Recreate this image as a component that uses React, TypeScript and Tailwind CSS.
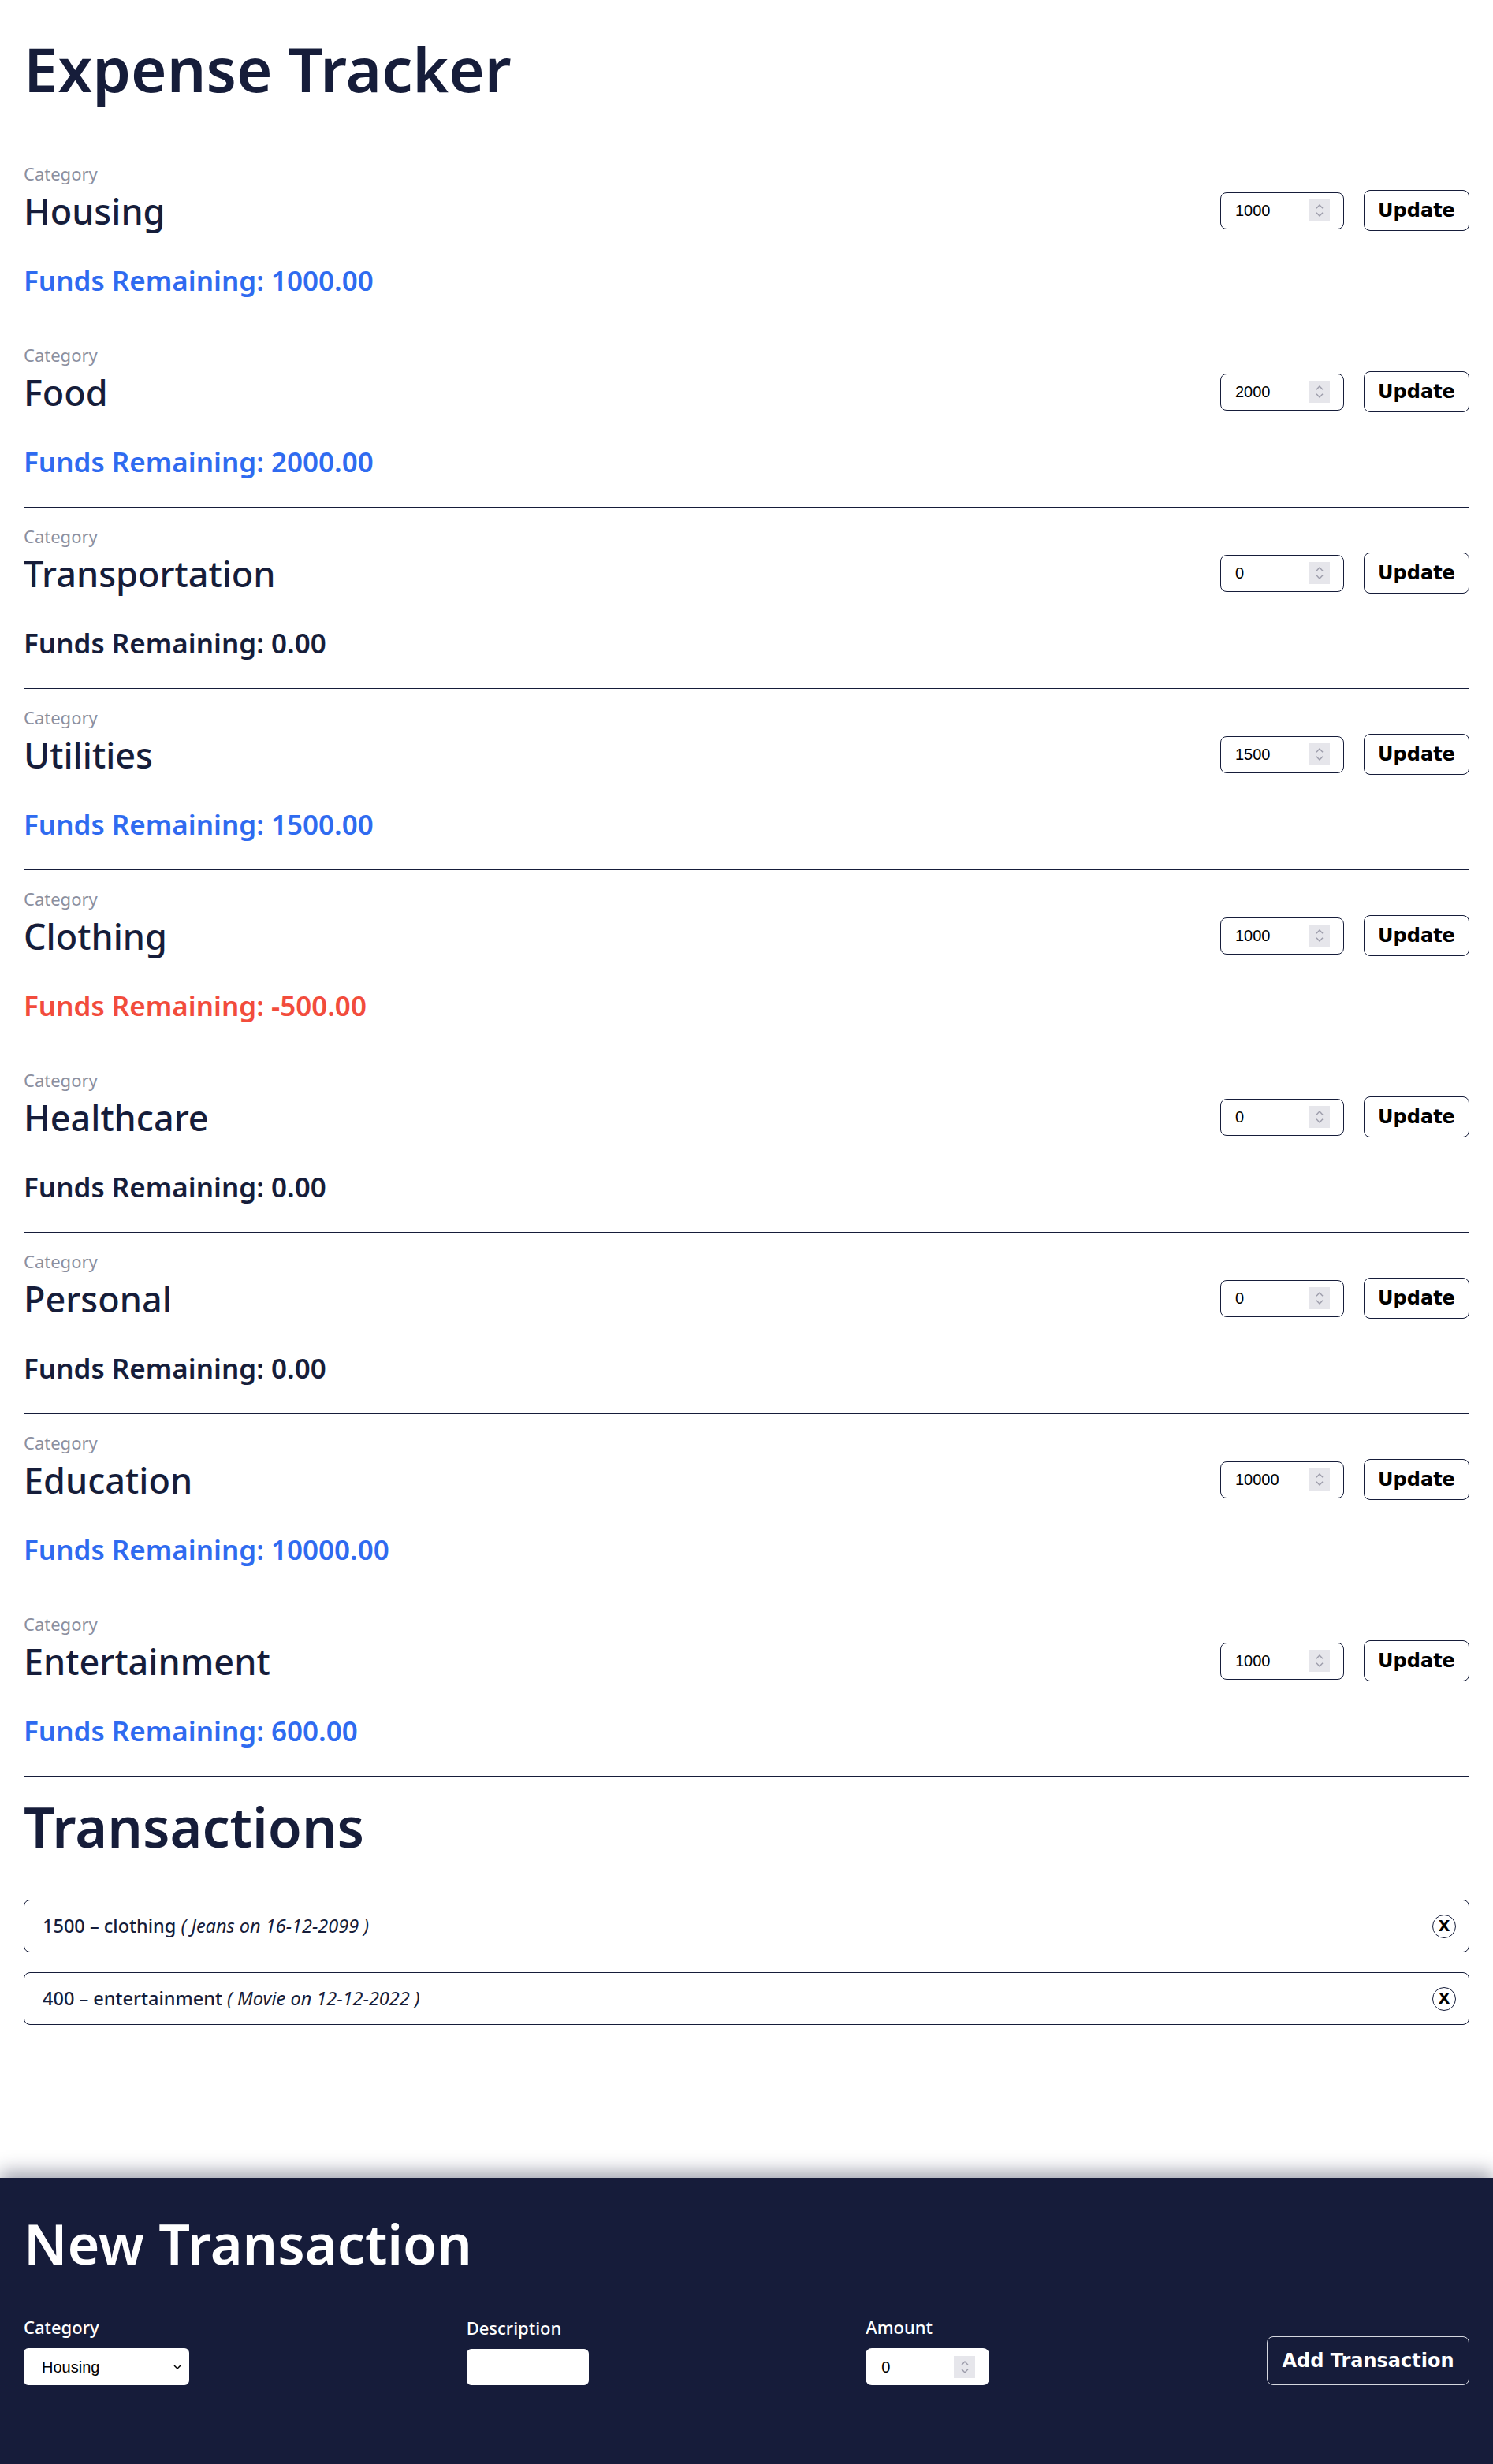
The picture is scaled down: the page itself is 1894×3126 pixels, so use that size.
import { useState } from "react";

type Category = {
    name: string;
    budget: number;
};

type Transaction = {
    id: number;
    amount: number;
    category: string;
    description: string;
    date: string;
};

const initialCategories: Category[] = [
    { name: "Housing", budget: 1000 },
    { name: "Food", budget: 2000 },
    { name: "Transportation", budget: 0 },
    { name: "Utilities", budget: 1500 },
    { name: "Clothing", budget: 1000 },
    { name: "Healthcare", budget: 0 },
    { name: "Personal", budget: 0 },
    { name: "Education", budget: 10000 },
    { name: "Entertainment", budget: 1000 },
];

const initialTransactions: Transaction[] = [
    { id: 1, amount: 1500, category: "clothing", description: "Jeans", date: "16-12-2099" },
    { id: 2, amount: 400, category: "entertainment", description: "Movie", date: "12-12-2022" },
];

function Spinner() {
    return (
        <div className="flex h-[28px] w-[27px] shrink-0 flex-col items-center justify-center gap-[4px] bg-[#e6e6eb]">
            <svg width="10" height="6" viewBox="0 0 10 6">
                <path d="M1 5.2 L5 1 L9 5.2" fill="none" stroke="#9d9dab" strokeWidth="1.4" />
            </svg>
            <svg width="10" height="6" viewBox="0 0 10 6">
                <path d="M1 0.8 L5 5 L9 0.8" fill="none" stroke="#9d9dab" strokeWidth="1.4" />
            </svg>
        </div>
    );
}

function CategoryRow({
    category,
    spent,
    onUpdate,
}: {
    category: Category;
    spent: number;
    onUpdate: (value: number) => void;
}) {
    const [draft, setDraft] = useState(String(category.budget));
    const remaining = category.budget - spent;

    // blue when there's money left, red when overspent, plain when nothing set
    let fundsColor = "text-[#161d3a]";
    if (remaining > 0) fundsColor = "text-[#2f6bf0]";
    if (remaining < 0) fundsColor = "text-[#f24c3c]";

    return (
        <section className="border-b border-[#161d3a] pt-[25px] pb-[40px]">
            <p className="h-[22px] text-[22px] leading-none text-[#8b8fa0]">Category</p>
            <div className="mt-[13px] flex h-[46px] items-center justify-between">
                <h2 className="text-[45px] leading-none font-medium">{category.name}</h2>
                <div className="flex items-center gap-[25px]">
                    <div className="flex h-[47px] w-[157px] items-center rounded-[8px] border border-[#161d3a] pl-[18px] pr-[17px]">
                        <input
                            type="text"
                            inputMode="numeric"
                            value={draft}
                            onChange={(e) => setDraft(e.target.value)}
                            className="w-full min-w-0 bg-transparent font-['Liberation_Sans',Arial,sans-serif] text-[20px] text-black outline-none"
                        />
                        <Spinner />
                    </div>
                    <button
                        type="button"
                        onClick={() => onUpdate(Number(draft) || 0)}
                        className="h-[52px] w-[134px] rounded-[8px] border border-[#161d3a] font-['DejaVu_Sans',Verdana,sans-serif] text-[24px] font-bold text-black"
                    >
                        Update
                    </button>
                </div>
            </div>
            <p className={`mt-[48px] h-[35px] text-[35px] leading-none font-semibold ${fundsColor}`}>
                Funds Remaining: {remaining.toFixed(2)}
            </p>
        </section>
    );
}

export default function App() {
    const [categories, setCategories] = useState<Category[]>(initialCategories);
    const [transactions, setTransactions] = useState<Transaction[]>(initialTransactions);
    const [newCategory, setNewCategory] = useState("Housing");
    const [newDescription, setNewDescription] = useState("");
    const [newAmount, setNewAmount] = useState("0");

    const spentFor = (name: string) =>
        transactions
            .filter((t) => t.category === name.toLowerCase())
            .reduce((sum, t) => sum + t.amount, 0);

    const updateBudget = (name: string, value: number) => {
        setCategories((prev) => prev.map((c) => (c.name === name ? { ...c, budget: value } : c)));
    };

    const addTransaction = () => {
        const amount = Number(newAmount);
        if (!amount) return;
        const d = new Date();
        const date = `${String(d.getDate()).padStart(2, "0")}-${String(d.getMonth() + 1).padStart(2, "0")}-${d.getFullYear()}`;
        setTransactions((prev) => [
            ...prev,
            { id: Date.now(), amount, category: newCategory.toLowerCase(), description: newDescription, date },
        ]);
        setNewDescription("");
        setNewAmount("0");
    };

    return (
        <div className="flex min-h-screen flex-col bg-white font-['Noto_Sans',sans-serif] text-[#161d3a]">
            <main className="flex-1 px-[30px] pt-[48px]">
                <h1 className="h-[78px] text-[78px] leading-none font-semibold">Expense Tracker</h1>

                <div className="mt-[58px]">
                    {categories.map((c) => (
                        <CategoryRow
                            key={c.name}
                            category={c}
                            spent={spentFor(c.name)}
                            onUpdate={(v) => updateBudget(c.name, v)}
                        />
                    ))}
                </div>

                <h2 className="mt-[28px] h-[70px] text-[70px] leading-none font-semibold">Transactions</h2>

                <ul className="mt-[58px] flex flex-col gap-[25px]">
                    {transactions.map((t) => (
                        <li
                            key={t.id}
                            className="flex h-[67px] items-center justify-between rounded-[8px] border border-[#161d3a] pl-[23px] pr-[16px]"
                        >
                            <p className="text-[23.5px] font-medium">
                                {t.amount} – {t.category}{" "}
                                <span className="font-normal italic">
                                    ( {t.description} on {t.date} )
                                </span>
                            </p>
                            <button
                                type="button"
                                onClick={() => setTransactions((prev) => prev.filter((x) => x.id !== t.id))}
                                className="flex h-[30px] w-[30px] items-center justify-center rounded-full border border-[#161d3a] font-['DejaVu_Sans',Verdana,sans-serif] text-[19px] leading-none font-bold text-black"
                            >
                                X
                            </button>
                        </li>
                    ))}
                </ul>
            </main>

            <footer className="h-[363px] bg-[#161c3a] px-[30px] pt-[48px] text-white shadow-[0_-8px_22px_rgba(22,28,58,0.4)]">
                <h2 className="h-[70px] text-[70px] leading-none font-semibold">New Transaction</h2>

                <div className="mt-[60px] flex items-end justify-between">
                    <div>
                        <label className="block h-[22px] text-[22px] leading-none font-medium">Category</label>
                        <div className="relative mt-[16px] w-[210px]">
                            <select
                                value={newCategory}
                                onChange={(e) => setNewCategory(e.target.value)}
                                className="h-[47px] w-full appearance-none rounded-[6px] bg-white pl-[23px] font-['Liberation_Sans',Arial,sans-serif] text-[20px] text-black outline-none"
                            >
                                {categories.map((c) => (
                                    <option key={c.name} value={c.name}>
                                        {c.name}
                                    </option>
                                ))}
                            </select>
                            <svg
                                className="pointer-events-none absolute top-1/2 right-[10px] -translate-y-1/2"
                                width="10"
                                height="7"
                                viewBox="0 0 10 7"
                            >
                                <path d="M1 1.5 L5 5.5 L9 1.5" fill="none" stroke="#000" strokeWidth="1.5" />
                            </svg>
                        </div>
                    </div>

                    <div>
                        <label className="block h-[22px] text-[22px] leading-none font-medium">Description</label>
                        <input
                            type="text"
                            value={newDescription}
                            onChange={(e) => setNewDescription(e.target.value)}
                            className="mt-[16px] block h-[46px] w-[155px] rounded-[6px] bg-white px-[12px] font-['Liberation_Sans',Arial,sans-serif] text-[20px] text-black outline-none"
                        />
                    </div>

                    <div>
                        <label className="block h-[22px] text-[22px] leading-none font-medium">Amount</label>
                        <div className="mt-[16px] flex h-[47px] w-[157px] items-center rounded-[8px] bg-white pl-[20px] pr-[18px]">
                            <input
                                type="text"
                                inputMode="numeric"
                                value={newAmount}
                                onChange={(e) => setNewAmount(e.target.value)}
                                className="w-full min-w-0 bg-transparent font-['Liberation_Sans',Arial,sans-serif] text-[20px] text-black outline-none"
                            />
                            <Spinner />
                        </div>
                    </div>

                    <button
                        type="button"
                        onClick={addTransaction}
                        className="h-[62px] w-[257px] rounded-[8px] border border-[#d5d7df] font-['DejaVu_Sans',Verdana,sans-serif] text-[24px] font-bold text-white"
                    >
                        Add Transaction
                    </button>
                </div>
            </footer>
        </div>
    );
}
